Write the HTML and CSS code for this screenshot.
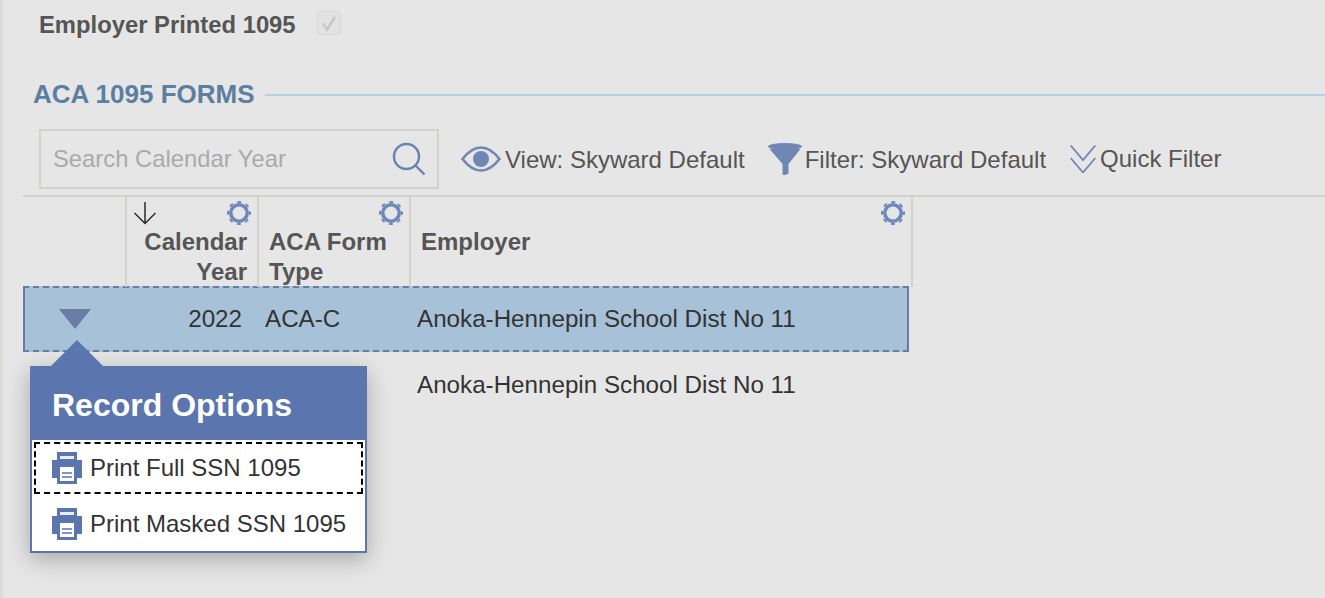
FILE: index.html
```html
<!DOCTYPE html>
<html lang="en">
<head>
<meta charset="utf-8">
<title>ACA 1095 Forms</title>
<link rel="stylesheet" href="styles.css">
</head>
<body>
<main class="page">
  <div class="field">
    <span class="field-label">Employer Printed 1095</span>
    <span class="checkbox">
      <svg viewBox="0 0 24 24" width="24" height="24"><path d="M5.500 12.500l4.500 6.500L18.500 5.500" fill="none" stroke="#c8c8c8" stroke-width="3"/></svg>
    </span>
  </div>

  <div class="section-head">
    <h2 class="section-title">ACA 1095 FORMS</h2>
    <span class="section-line"></span>
  </div>

  <div class="toolbar">
    <div class="search">
      <span class="search-text">Search Calendar Year</span>
      <svg class="search-icon" viewBox="0 0 34 34" width="34" height="34"><circle cx="14.500" cy="14.500" r="12.500" fill="none" stroke="#6a82b5" stroke-width="2.400"/><path d="M23.500 23.500l9 9" stroke="#6a82b5" stroke-width="2.400" fill="none"/></svg>
    </div>
    <div class="tool tool-view">
      <svg viewBox="0 0 40 26" width="40" height="26"><path d="M1.500 13C8 4.500 14 1.500 20 1.500S32 4.500 38.500 13C32 21.500 26 24.500 20 24.500S8 21.500 1.500 13z" fill="none" stroke="#7087b6" stroke-width="2.600"/><circle cx="20" cy="13" r="8" fill="#7087b6"/></svg>
      <span class="tool-label">View: Skyward Default</span>
    </div>
    <div class="tool tool-filter">
      <svg viewBox="0 0 34 32" width="34" height="32"><ellipse cx="17" cy="3.500" rx="17" ry="3.500" fill="#7087b6"/><path d="M1.500 6h31L20.500 21v9.500q-2 1.500-6 1.500V21z" fill="#7087b6"/></svg>
      <span class="tool-label">Filter: Skyward Default</span>
    </div>
    <div class="tool tool-quick">
      <svg viewBox="0 0 26 28" width="26" height="28"><path d="M.7 .5L13 15 25.300 .5M.7 13L13 27.500 25.300 13" fill="none" stroke="#7087b6" stroke-width="1.800"/></svg>
      <span>Quick Filter</span>
    </div>
  </div>

  <section class="grid">
    <div class="grid-head">
      <div class="th th-blank"></div>
      <div class="th th-num">
        <div class="th-icons">
          <svg class="sort" viewBox="0 0 24 24" width="24" height="24"><path d="M12 1v21.500M1.500 12L12 22.500 22.500 12" fill="none" stroke="#2b2b2b" stroke-width="1.500"/></svg>
          <svg class="gear" viewBox="0 0 24 24" width="24" height="24"><circle cx="12" cy="12" r="8.250" fill="none" stroke="#6f87ba" stroke-width="3.500"/><circle cx="12" cy="12" r="11" fill="none" stroke="#6f87ba" stroke-width="2" stroke-dasharray="4 4.640" stroke-dashoffset="2"/></svg>
        </div>
        <div class="th-label">Calendar<br>Year</div>
      </div>
      <div class="th">
        <div class="th-icons">
          <svg class="gear" viewBox="0 0 24 24" width="24" height="24"><circle cx="12" cy="12" r="8.250" fill="none" stroke="#6f87ba" stroke-width="3.500"/><circle cx="12" cy="12" r="11" fill="none" stroke="#6f87ba" stroke-width="2" stroke-dasharray="4 4.640" stroke-dashoffset="2"/></svg>
        </div>
        <div class="th-label">ACA Form<br>Type</div>
      </div>
      <div class="th th-last">
        <div class="th-icons">
          <svg class="gear" viewBox="0 0 24 24" width="24" height="24"><circle cx="12" cy="12" r="8.250" fill="none" stroke="#6f87ba" stroke-width="3.500"/><circle cx="12" cy="12" r="11" fill="none" stroke="#6f87ba" stroke-width="2" stroke-dasharray="4 4.640" stroke-dashoffset="2"/></svg>
        </div>
        <div class="th-label">Employer</div>
      </div>
    </div>

    <div class="row row-selected">
      <div class="td td-toggle"><span class="caret"></span></div>
      <div class="td td-num">2022</div>
      <div class="td">ACA-C</div>
      <div class="td td-emp">Anoka-Hennepin School Dist No 11</div>
    </div>
    <div class="row">
      <div class="td td-toggle"></div>
      <div class="td td-num"></div>
      <div class="td"></div>
      <div class="td td-emp">Anoka-Hennepin School Dist No 11</div>
    </div>
  </section>

  <div class="menu">
    <div class="menu-head">Record Options</div>
    <div class="menu-body">
      <div class="menu-item menu-item-focus">
        <svg viewBox="0 0 30 32" width="30" height="32"><path d="M5 0h20v8h5v18h-5v6H5v-6H0V8h5z" fill="#5b75ae"/><path d="M8 4h14v3H8z" fill="#e8ecf5"/><path d="M8 15h14v14H8z" fill="#fff"/><path d="M10 21h10M10 25h10" stroke="#5b75ae" stroke-width="1.400"/></svg>
        <span>Print Full SSN 1095</span>
      </div>
      <div class="menu-item">
        <svg viewBox="0 0 30 32" width="30" height="32"><path d="M5 0h20v8h5v18h-5v6H5v-6H0V8h5z" fill="#5b75ae"/><path d="M8 4h14v3H8z" fill="#e8ecf5"/><path d="M8 15h14v14H8z" fill="#fff"/><path d="M10 21h10M10 25h10" stroke="#5b75ae" stroke-width="1.400"/></svg>
        <span>Print Masked SSN 1095</span>
      </div>
    </div>
  </div>
</main>
</body>
</html>
```

FILE: styles.css
```css
* { box-sizing: border-box; }

html, body {
  margin: 0;
  height: 100%;
  overflow: hidden;
}

body {
  background: #e6e6e6;
  color: #333;
  font-family: "Liberation Sans", Arial, sans-serif;
  font-size: 24px;
}

.page {
  position: relative;
  height: 598px;
  border-left: 3px solid #dcdcd8;
  padding-top: 12px;
}

.field {
  display: flex;
  align-items: center;
  gap: 21px;
  height: 26px;
  margin-left: 36px;
}

.field-label {
  font-size: 23.800px;
  font-weight: 700;
  color: #555;
}

.checkbox {
  display: flex;
  width: 24px;
  height: 24px;
  border: 1px solid #d8d8d8;
  border-radius: 4px;
  background: #e2e2e2;
  margin-top: -4px;
  align-items: center;
  justify-content: center;
  flex: none;
}

.section-head {
  display: flex;
  align-items: center;
  gap: 10px;
  height: 26px;
  margin: 43px 0 0 30px;
}

.section-title {
  margin: 0;
  font-size: 26px;
  font-weight: 700;
  color: #5a7fa3;
  line-height: 26px;
  white-space: nowrap;
}

.section-line {
  flex: 1;
  height: 2px;
  background: #b5cfe6;
  margin-top: 1px;
}

.toolbar {
  display: flex;
  align-items: center;
  height: 60px;
  margin: 22px 0 0 36px;
}

.search {
  display: flex;
  align-items: center;
  justify-content: space-between;
  width: 400px;
  height: 60px;
  border: 2px solid #d2d2cc;
  padding: 0 11px 0 12px;
  margin-right: 22px;
}

.search-text {
  color: #aaa;
  font-size: 23.800px;
}

.tool {
  display: flex;
  align-items: center;
  color: #555;
  white-space: nowrap;
}

.tool-label { padding-top: 2px; }

.tool-view { gap: 4px; margin-right: 23px; }
.tool-filter { gap: 3px; margin-right: 24px; }
.tool-quick { gap: 4px; }

.grid {
  margin: 6px 0 0 20px;
  border-top: 2px solid #d2d2cc;
}

.grid-head {
  display: grid;
  grid-template-columns: 102px 132px 152px 504px;
  height: 89px;
}

.th {
  position: relative;
  border-left: 2px solid #d2d2cc;
  color: #555;
  font-weight: 700;
  line-height: 30px;
  padding: 30px 10px 0 10px;
}

.th-blank { border-left: 0; }
.th-last { border-right: 2px solid #d2d2cc; }
.th-num { text-align: right; }

.th-icons {
  position: absolute;
  top: 4px;
  left: 6px;
  right: 6px;
  display: flex;
  justify-content: flex-end;
}

.th-icons .sort { margin-right: auto; }

.gear { display: block; }

.row {
  display: grid;
  grid-template-columns: 102px 132px 152px 496px;
  width: 886px;
  height: 66px;
  align-items: center;
  border: 2px solid transparent;
}

.row-selected {
  background: #a7c1d8;
  border-color: #6a7ba6;
  border-top-style: dashed;
  border-bottom-style: dashed;
}

.td {
  padding: 0 5px 0 6px;
  color: #333;
  white-space: nowrap;
  font-size: 24.200px;
}

.td-num { text-align: right; padding-right: 17px; }

.td-toggle {
  display: flex;
  justify-content: center;
  padding: 0 2px 0 0;
}

.caret {
  width: 0;
  height: 0;
  border-left: 16px solid transparent;
  border-right: 16px solid transparent;
  border-top: 20px solid #6a7ba6;
}

.menu {
  position: absolute;
  left: 27px;
  top: 366px;
  width: 337px;
  box-shadow: 0 6px 22px rgba(0, 0, 0, .28);
}

.menu::before {
  content: "";
  position: absolute;
  left: 21px;
  top: -26px;
  border-left: 26px solid transparent;
  border-right: 26px solid transparent;
  border-bottom: 26px solid #5b75ae;
}

.menu-head {
  height: 74px;
  background: #5b75ae;
  color: #fff;
  font-size: 32px;
  font-weight: 700;
  line-height: 78px;
  padding-left: 22px;
}

.menu-body {
  background: #fff;
  border: 2px solid #5b75ae;
  border-top: 0;
  padding: 2px;
  height: 113px;
}

.menu-item {
  display: flex;
  align-items: center;
  gap: 8px;
  height: 52px;
  padding-left: 16px;
  border: 2px dashed transparent;
  margin-bottom: 4px;
  color: #333;
}

.menu-item-focus { border-color: #000; }
```
